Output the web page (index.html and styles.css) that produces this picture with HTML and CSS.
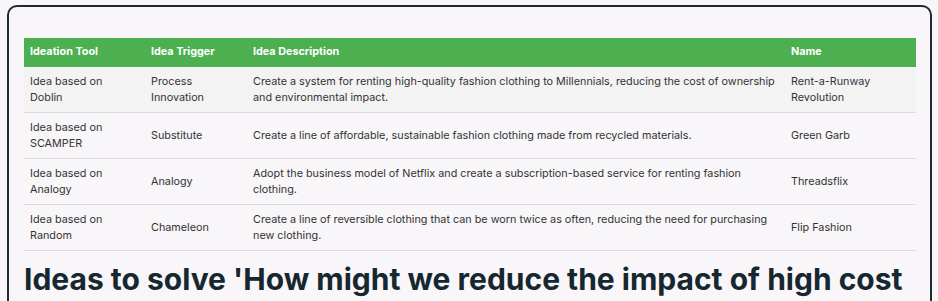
FILE: index.html
```html
<!DOCTYPE html>
<html lang="en">
<head>
    <meta charset="UTF-8">
    <meta name="viewport" content="width=device-width, initial-scale=1.0">
    <title>Ideation Results</title>
    <link rel="stylesheet" href="styles.css">
</head>
<body>
    <div class="card">
        <!-- Ideas table -->
        <table class="ideas">
            <thead>
                <tr>
                    <th class="col-tool">Ideation Tool</th>
                    <th class="col-trigger">Idea Trigger</th>
                    <th class="col-desc">Idea Description</th>
                    <th class="col-name">Name</th>
                </tr>
            </thead>
            <tbody>
                <tr class="active">
                    <td>Idea based on Doblin</td>
                    <td>Process Innovation</td>
                    <td class="desc">Create a system for renting high-quality fashion clothing to Millennials, reducing the cost of ownership and environmental impact.</td>
                    <td>Rent-a-Runway Revolution</td>
                </tr>
                <tr>
                    <td>Idea based on SCAMPER</td>
                    <td>Substitute</td>
                    <td class="desc">Create a line of affordable, sustainable fashion clothing made from recycled materials.</td>
                    <td>Green Garb</td>
                </tr>
                <tr>
                    <td>Idea based on Analogy</td>
                    <td>Analogy</td>
                    <td class="desc">Adopt the business model of Netflix and create a subscription-based service for renting fashion clothing.</td>
                    <td>Threadsflix</td>
                </tr>
                <tr>
                    <td>Idea based on Random</td>
                    <td>Chameleon</td>
                    <td class="desc">Create a line of reversible clothing that can be worn twice as often, reducing the need for purchasing new clothing.</td>
                    <td>Flip Fashion</td>
                </tr>
            </tbody>
        </table>

        <h2>Ideas to solve 'How might we reduce the impact of high cost of fashion clothing for Millennials?'</h2>
    </div>
</body>
</html>
```

FILE: styles.css
```css
body {
    font-family: 'Inter', sans-serif;
    margin: 0;
    padding: 5px 6px 0 7px;
    background: #f8f6f8;
    color: #333;
}
.card {
    border: 2px solid #1e2b33;
    border-radius: 10px;
    padding: 31px 14px 20px 15px;
    min-height: 400px;
}
.ideas {
    width: 100%;
    border-collapse: collapse;
    font-size: 10.8px;
    line-height: 16px;
}
.ideas th {
    background: #4caf50;
    color: #fff;
    font-weight: 700;
    text-align: left;
    padding: 6px 12px 7px 6px;
    height: 16px;
}
.ideas td {
    padding: 7px 12px 6px 6px;
    vertical-align: middle;
    border-bottom: 1px solid #dddbdd;
}
.ideas td.desc,
.ideas th.col-desc {
    padding-right: 4px;
}
.ideas tr.active {
    background: #f3f3f3;
}
.col-tool { width: 103px; }
.col-trigger { width: 84px; }
.col-name { width: 113px; }
h2 {
    font-size: 30px;
    font-weight: 700;
    color: #162730;
    margin: 9px 0 0;
    line-height: 38px;
}
```
